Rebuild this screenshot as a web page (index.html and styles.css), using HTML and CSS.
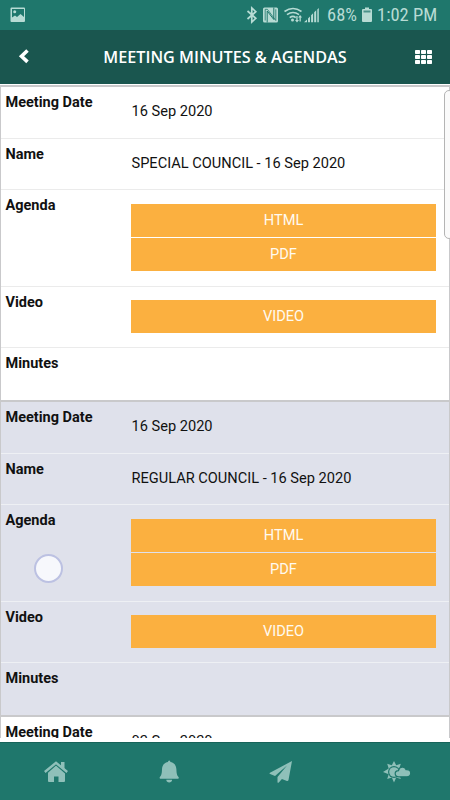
FILE: index.html
```html
<!DOCTYPE html>
<html lang="en">
<head>
<meta charset="utf-8">
<title>Meeting Minutes &amp; Agendas</title>
<link rel="stylesheet" href="styles.css">
</head>
<body>
<div class="app">
  <div class="status">
    <svg class="photo" width="16" height="16" viewBox="0 0 16 16"><path fill="currentColor" fill-rule="evenodd" d="M1.500 0.500h12.500a1 1 0 0 1 1 1v12.500a1 1 0 0 1-1 1h-12.500a1 1 0 0 1-1-1v-12.500a1 1 0 0 1 1-1zM2 2v8.500l3-2 2 1.500 3.500-3 3.500 3v-8z"/><circle cx="4.700" cy="4.700" r="1.500" fill="currentColor"/></svg>
    <svg class="signals" width="78" height="18" viewBox="0 0 78 18">
      <path d="M1.500 5l8.300 7.300-4 3.700V2l4 3.700L1.500 13" fill="none" stroke="currentColor" stroke-width="1.700"/>
      <rect x="17" y="1.500" width="15" height="15" rx="1.500" fill="currentColor"/>
      <path d="M21.200 16.500V5l6.600 8.500V1.500" fill="none" stroke="#1f776c" stroke-width="1"/>
      <path d="M19.200 14.500V3.300h2.200l8.400 11.200V3.300" fill="none" stroke="#1f776c" stroke-width=".8"/>
      <g fill="none" stroke="currentColor" stroke-width="1.600"><path d="M38.500 5.500q8.500-6 17 0M41 8.700q6-4.500 12 0M43.700 11.700q3.300-2.500 6 0"/></g>
      <circle cx="46.500" cy="14" r="1.500" fill="currentColor"/>
      <path fill="currentColor" d="M50.300 10h1.300v4h1.400l-2 2.500-2-2.500h1.300zM54.800 15.500h-1.300v-4h-1.400l2-2.500 2 2.500h-1.300z"/>
      <g fill="currentColor"><path d="M61 13.500v2.700h-3zM62 12.500l2-2v5.700h-2zM65.100 9.300l2-2v8.900h-2zM68.200 6.300l2-2v11.900h-2z"/><path d="M71.300 3.500l1.500-1.500v14.200h-1.500z"/></g>
    </svg>
    <span class="percent">68%</span>
    <svg class="battery" width="10" height="16" viewBox="0 0 10 16"><path fill="currentColor" d="M3 0.500h4v1.500h2q1 0 1 1V14q0 1-1 1H1q-1 0-1-1V3q0-1 1-1h2z"/><path d="M1.500 3.500h7v2h-7z" fill="#4b928b"/></svg>
    <span class="clock">1:02 PM</span>
  </div>
  <header class="header">
    <svg class="back" width="12" height="16" viewBox="0 0 12 16"><path d="M9.500 1.500L3.500 7.200l6 5.700" fill="none" stroke="#fff" stroke-width="3.600"/></svg>
    <h1>MEETING MINUTES &amp; AGENDAS</h1>
    <svg class="grid" width="17" height="14" viewBox="0 0 17 14"><g fill="#fff"><rect width="5" height="4" rx=".7"/><rect x="6" width="5" height="4" rx=".7"/><rect x="12" width="5" height="4" rx=".7"/><rect y="5" width="5" height="4" rx=".7"/><rect x="6" y="5" width="5" height="4" rx=".7"/><rect x="12" y="5" width="5" height="4" rx=".7"/><rect y="10" width="5" height="4" rx=".7"/><rect x="6" y="10" width="5" height="4" rx=".7"/><rect x="12" y="10" width="5" height="4" rx=".7"/></g></svg>
  </header>
  <main class="list">
    <section class="meeting">
      <div class="row"><b>Meeting Date</b><span>16 Sep 2020</span></div>
      <div class="row name"><b>Name</b><span>SPECIAL COUNCIL - 16 Sep 2020</span></div>
      <div class="row agenda"><b>Agenda</b><div class="buttons"><a>HTML</a><a>PDF</a></div></div>
      <div class="row video"><b>Video</b><div class="buttons"><a>VIDEO</a></div></div>
      <div class="row minutes"><b>Minutes</b></div>
    </section>
    <section class="meeting shaded">
      <div class="row"><b>Meeting Date</b><span>16 Sep 2020</span></div>
      <div class="row name"><b>Name</b><span>REGULAR COUNCIL - 16 Sep 2020</span></div>
      <div class="row agenda"><b>Agenda</b><div class="buttons"><a>HTML</a><a>PDF</a></div><i class="touch"></i></div>
      <div class="row video"><b>Video</b><div class="buttons"><a>VIDEO</a></div></div>
      <div class="row minutes"><b>Minutes</b></div>
    </section>
    <section class="meeting">
      <div class="row"><b>Meeting Date</b><span>02 Sep 2020</span></div>
    </section>
    <i class="scrollbar"></i>
  </main>
  <nav class="tabs">
    <svg width="26" height="24" viewBox="0 0 26 24"><path fill="currentColor" d="M13 4.600L22 12.600V21q0 1-1 1h-5.500v-5.500h-4.500V22H6q-1 0-1-1v-8.400z"/><path d="M1.800 12.700L13 3l11.200 9.700" fill="none" stroke="#1f776c" stroke-width="4"/><path d="M1.800 12L13 2.800l11.200 9.200" fill="none" stroke="currentColor" stroke-width="2.400"/><path fill="currentColor" d="M18 2h3.500v8l-3.500-3z"/></svg>
    <svg width="26" height="24" viewBox="0 0 26 24"><path fill="currentColor" d="M12 2q0-1.500 1.200-1.500t1.200 1.500c4.200.8 5.800 3.700 6 7.500.2 5 1 6.500 2.100 7.500.6.800.1 1.700-.8 1.700H4.700c-.9 0-1.400-.9-.8-1.700 1.100-1 1.900-2.500 2.100-7.500.2-3.800 1.800-6.700 6-7.500zM10.300 19.800h5.800c0 3.600-5.800 3.600-5.800 0z"/></svg>
    <svg width="26" height="24" viewBox="0 0 26 24"><path fill="currentColor" d="M24 1L2 12.700q-1 .8.100 1.300l4.900 2L19 5.500 9.500 17v5q.2 1.500 1.300.4l3.100-3.500 5 2.100q1.300.3 1.600-1z"/></svg>
    <svg class="weather" width="29" height="24" viewBox="0 0 29 24"><path fill="currentColor" d="M12 1l2.200 4.300 4.600-1.500-1.500 4.600L21.600 12l-4.300 2.300 1.500 4.600-4.600-1.500L12 22.500l-2.200-5.100-4.600 1.500 1.500-4.600L1 12l5.700-3.600-1.500-4.600 4.600 1.500z"/><circle cx="12" cy="12" r="6" fill="#1f776c"/><circle cx="12" cy="12" r="4.800" fill="currentColor"/><path fill="currentColor" stroke="#1f776c" stroke-width="1.200" d="M17 16.800c-5 0-5-6-.5-6.200.8-4.500 6.300-4.500 7.500-1 6-.8 6.300 7.200.8 7.200z"/></svg>
  </nav>
</div>
</body>
</html>
```
FILE: styles.css
```css
* { box-sizing: border-box; }
body { margin: 0; background: #fff; font-family: Roboto, "Liberation Sans", sans-serif; }
.app { display: flex; flex-direction: column; width: 450px; height: 800px; overflow: hidden; }
svg { display: block; flex: none; }

.status { display: flex; align-items: center; flex: none; height: 30px; padding: 0 10px; background: #1f776c; color: #b7dbd4; font-size: 18.5px; white-space: nowrap; }
.signals { margin-left: auto; }
.percent { width: 31px; margin-left: 3px; }
.battery { margin-left: 4px; }
.clock { width: 63px; margin-left: 5px; }
.percent, .clock { font-family: "Roboto Condensed", Roboto, sans-serif; font-stretch: condensed; line-height: 31px; }

.header { display: flex; align-items: center; justify-content: space-between; flex: none; height: 54px; padding: 0 18px; background: #1a564f; color: #fff; }
.header h1 { margin: 0 0 0 5px; font: 600 16.2px/54px "Open Sans", "Noto Sans", sans-serif; white-space: nowrap; }

.list { position: relative; flex: 1; margin-top: 1px; overflow: hidden; }
.meeting { height: 315px; border: 2px solid #c9c9cb; border-bottom: 0; border-left-width: 1px; border-right-width: 1px; background: #fff; color: #111; }
.shaded { background: #dfe1eb; }
.row { position: relative; display: flex; height: 51.5px; padding-left: 4.5px; border-bottom: 1px solid #ebebeb; font-size: 14.6px; }
.shaded .row { border-color: #eef0f4; }
.row b { flex: none; width: 125.5px; padding-top: 7px; line-height: 18px; font-size: 14.5px; font-weight: 700; }
.row span { padding: 15px 0 0 .5px; line-height: 18px; white-space: nowrap; }
.agenda { height: 96.5px; }
.video { height: 61.5px; }
.minutes { border-bottom: 0; }
.buttons { display: flex; flex-direction: column; gap: 1px; flex: 1; margin: 14px 13px 0 0; }
.video .buttons { margin-top: 13px; }
.buttons a { height: 33px; background: #fbb040; color: #fffaf0; line-height: 33px; text-align: center; }
.touch { position: absolute; left: 33px; top: 49px; width: 29px; height: 29px; border: 2px solid #bcc1e2; border-radius: 50%; background: #f7f8fc; }
.scrollbar { position: absolute; right: -4px; top: 5px; width: 10px; height: 149px; border: 1px solid #b4b4b4; border-radius: 5px; background: #fafafa; }

.tabs { display: grid; grid-template-columns: repeat(4, 1fr); place-items: center; flex: none; height: 58px; margin-top: 4px; border-top: 1px solid #17645a; background: #1f776c; color: #8fc0b9; }
.weather { margin-left: 5px; }
```
